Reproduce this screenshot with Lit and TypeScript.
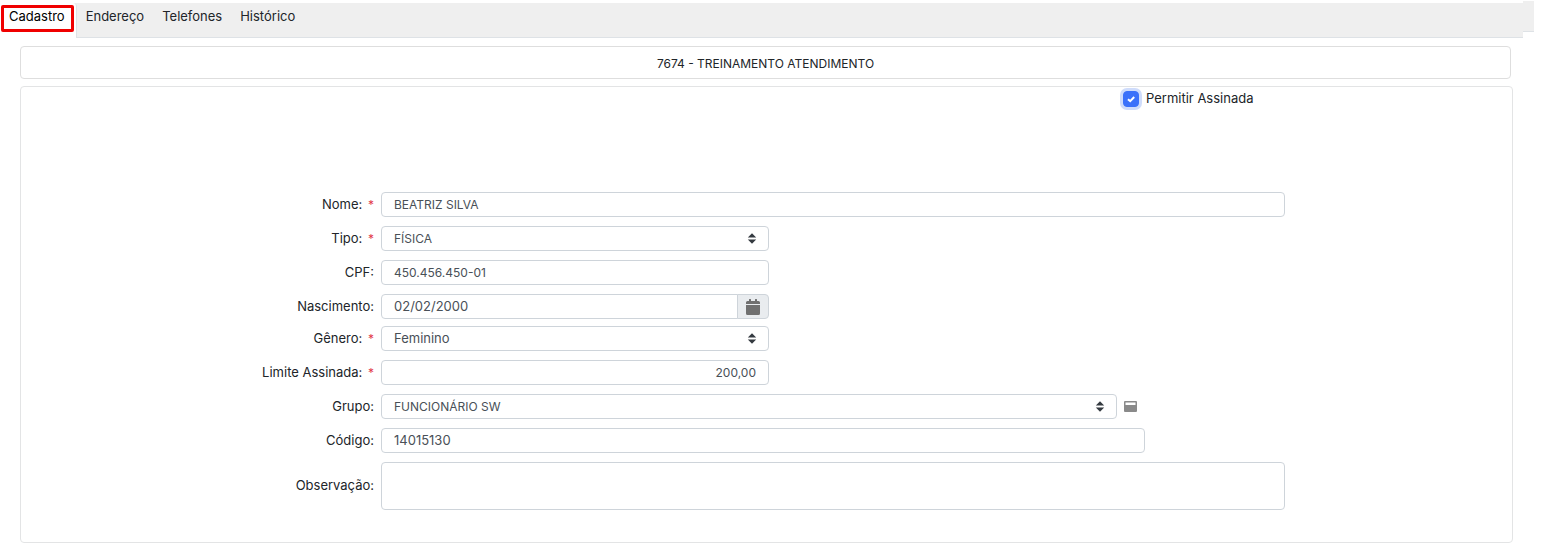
import { LitElement, html, css, svg } from "lit";
import { customElement, state } from "lit/decorators.js";

const tabs = ["Cadastro", "Endereço", "Telefones", "Histórico"];

@customElement("app-root")
export class AppRoot extends LitElement {
  @state() private activeTab = 0;

  static styles = css`
    :host {
      display: block;
      font-family: "Inter", "Liberation Sans", sans-serif;
      font-size: 13px;
      line-height: 20px;
      color: #212529;
      background: #fff;
    }
    * {
      box-sizing: border-box;
    }
    button,
    input,
    select,
    textarea {
      font: inherit;
      color: inherit;
      margin: 0;
    }
    .header {
      display: flex;
      align-items: flex-start;
      padding: 1px 10px 0 0;
    }
    .tabs {
      flex: 1;
      display: flex;
      height: 35px;
      margin-top: 2px;
      background: #efefef;
      border-bottom: 1px solid #dee2e6;
    }
    .strip-end {
      width: 11px;
      height: 31px;
      background: #efefef;
      border-bottom: 1px solid #dee2e6;
    }
    .tab {
      height: 27px;
      padding: 0 9px 2px;
      border: 0;
      background: none;
      white-space: nowrap;
      cursor: pointer;
    }
    .tab.active {
      height: 35px;
      padding: 2px 2px 6px 1px;
      background: #fff;
      border-right: 1px solid #dee2e6;
      border-top-right-radius: 4px;
      color: #000;
    }
    .mark {
      display: block;
      height: 27px;
      padding: 0 6px 0 5px;
      border: 3px solid #f00000;
      border-radius: 2px;
      line-height: 17px;
    }
    .title {
      margin: 8px 33px 0 20px;
      height: 33px;
      padding: 7px 0 0;
      border: 1px solid #dedede;
      border-radius: 4px;
      font-size: 12px;
      font-weight: 400;
      line-height: 20px;
      text-align: center;
    }
    .panel {
      margin: 7px 31px 0 20px;
      padding-bottom: 32px;
      border: 1px solid #e3e4e5;
      border-radius: 4px;
    }
    .options {
      display: grid;
      grid-template-columns: 1102fr 389fr;
      margin-bottom: 81px;
    }
    .check {
      grid-column: 2;
      display: flex;
      align-items: center;
      gap: 7px;
      height: 24px;
    }
    .check label {
      padding-bottom: 2px;
    }
    .checkwrap {
      display: grid;
    }
    .checkwrap > * {
      grid-area: 1 / 1;
    }
    .box {
      appearance: none;
      width: 16px;
      height: 16px;
      border-radius: 4px;
      border: 1px solid #adb5bd;
    }
    .box:checked {
      background: #3b71fa;
      border-color: #3b71fa;
      box-shadow: 0 0 0 3px #cfdcfb;
    }
    .tick {
      width: 16px;
      height: 16px;
      pointer-events: none;
    }
    .box:not(:checked) + .tick {
      display: none;
    }
    .row {
      display: grid;
      grid-template-columns: 353fr 904fr 220fr;
      column-gap: 7px;
      align-items: center;
      margin-bottom: 9px;
    }
    .row.tight {
      margin-bottom: 7px;
    }
    .row.last {
      margin-bottom: 0;
    }
    .label {
      padding-bottom: 2px;
      text-align: right;
      white-space: nowrap;
    }
    .req {
      margin-left: 2px;
      font-size: 12px;
      line-height: 12px;
      color: #e2384a;
    }
    .slot {
      display: grid;
      grid-template-columns: 1fr;
    }
    .slot.short {
      grid-template-columns: 388fr 516fr;
    }
    .slot.medium {
      grid-template-columns: 764fr 140fr;
    }
    .field {
      display: block;
      width: 100%;
      min-width: 0;
      height: 25px;
      padding: 0 12px 2px;
      border: 1px solid #ced4da;
      border-radius: 4px;
      background: #fff;
      color: #495057;
      appearance: none;
      outline: none;
    }
    .field:focus {
      border-color: #3b71fa;
    }
    .field.compact {
      padding-bottom: 0;
      font-size: 12px;
    }
    .field.right {
      text-align: right;
    }
    .field.area {
      height: 48px;
      resize: none;
    }
    .group {
      display: flex;
    }
    .group > .field {
      flex: 1;
      border-radius: 4px 0 0 4px;
    }
    .addon {
      display: grid;
      place-items: center;
      width: 32px;
      height: 25px;
      padding: 0;
      margin-left: -1px;
      border: 1px solid #ced4da;
      border-radius: 0 4px 4px 0;
      background: #e9ecef;
    }
    .select {
      flex: 1;
      position: relative;
    }
    .arrows {
      position: absolute;
      right: 12px;
      top: 7px;
      width: 10px;
      height: 11px;
      pointer-events: none;
    }
    .open {
      width: 28px;
      height: 25px;
      padding: 0 0 0 7px;
      border: 0;
      background: none;
      display: flex;
      align-items: center;
    }
    svg {
      display: block;
    }
  `;

  private label(id: string, text: string, required = false) {
    return html`<label class="label" for=${id}
      >${text}${required ? html` <span class="req">*</span>` : ""}</label
    >`;
  }

  private select(id: string, value: string, compact = false) {
    return html`<div class="select">
      <select class=${compact ? "field compact" : "field"} id=${id}>
        <option>${value}</option>
      </select>
      <svg class="arrows" viewBox="0 0 10 11" aria-hidden="true">
        ${svg`<path d="M5 0.3 L9.2 4.6 H0.8 Z M5 10.7 L9.2 6.4 H0.8 Z" fill="#343a40"/>`}
      </svg>
    </div>`;
  }

  render() {
    return html`
      <header class="header">
        <nav class="tabs" role="tablist">
          ${tabs.map(
            (name, i) => html`<button
              class=${i === this.activeTab ? "tab active" : "tab"}
              role="tab"
              aria-selected=${i === this.activeTab ? "true" : "false"}
              @click=${() => (this.activeTab = i)}
            >
              ${i === this.activeTab ? html`<span class="mark">${name}</span>` : name}
            </button>`
          )}
        </nav>
        <div class="strip-end"></div>
      </header>
      <h1 class="title">7674 - TREINAMENTO ATENDIMENTO</h1>
      <form class="panel" @submit=${(e: Event) => e.preventDefault()}>
        <div class="options">
          <div class="check">
            <span class="checkwrap">
              <input class="box" type="checkbox" id="permitir" checked />
              <svg class="tick" viewBox="0 0 16 16" aria-hidden="true">
                <path d="M5 8.2 L7.2 10.2 L11.2 6" fill="none" stroke="#fff" stroke-width="2" />
              </svg>
            </span>
            <label for="permitir">Permitir Assinada</label>
          </div>
        </div>
        <div class="row">
          ${this.label("nome", "Nome:", true)}
          <div class="slot"><input class="field compact" id="nome" value="BEATRIZ SILVA" /></div>
        </div>
        <div class="row">
          ${this.label("tipo", "Tipo:", true)}
          <div class="slot short">${this.select("tipo", "FÍSICA", true)}</div>
        </div>
        <div class="row">
          ${this.label("cpf", "CPF:")}
          <div class="slot short">
            <input class="field compact" id="cpf" value="450.456.450-01" />
          </div>
        </div>
        <div class="row tight">
          ${this.label("nascimento", "Nascimento:")}
          <div class="slot short">
            <div class="group">
              <input class="field" id="nascimento" value="02/02/2000" />
              <button class="addon" type="button" aria-label="Calendário">
                <svg width="14" height="16" viewBox="0 0 14 16" aria-hidden="true">
                  <path
                    d="M0 6 H14 V14.5 Q14 16 12.5 16 H1.5 Q0 16 0 14.5 Z M0 5 V3.5 Q0 2 1.5 2 H3 V0.4 Q3 0 3.4 0 H4.6 Q5 0 5 0.4 V2 H9 V0.4 Q9 0 9.4 0 H10.6 Q11 0 11 0.4 V2 H12.5 Q14 2 14 3.5 V5 Z"
                    fill="#707070"
                  />
                </svg>
              </button>
            </div>
          </div>
        </div>
        <div class="row">
          ${this.label("genero", "Gênero:", true)}
          <div class="slot short">${this.select("genero", "Feminino")}</div>
        </div>
        <div class="row">
          ${this.label("limite", "Limite Assinada:", true)}
          <div class="slot short">
            <input class="field compact right" id="limite" value="200,00" />
          </div>
        </div>
        <div class="row">
          ${this.label("grupo", "Grupo:")}
          <div class="slot medium">
            <div class="group">
              ${this.select("grupo", "FUNCIONÁRIO SW", true)}
              <button class="open" type="button" aria-label="Abrir grupos">
                <svg width="13" height="11" viewBox="0 0 13 11" aria-hidden="true">
                  <path
                    fill-rule="evenodd"
                    d="M1 0 H12 Q13 0 13 1 V10 Q13 11 12 11 H1 Q0 11 0 10 V1 Q0 0 1 0 Z M1.5 1.5 V4 H11.5 V1.5 Z"
                    fill="#8a8a8a"
                  />
                </svg>
              </button>
            </div>
          </div>
        </div>
        <div class="row">
          ${this.label("codigo", "Código:")}
          <div class="slot medium"><input class="field" id="codigo" value="14015130" /></div>
        </div>
        <div class="row last">
          ${this.label("observacao", "Observação:")}
          <div class="slot"><textarea class="field area" id="observacao"></textarea></div>
        </div>
      </form>
    `;
  }
}
